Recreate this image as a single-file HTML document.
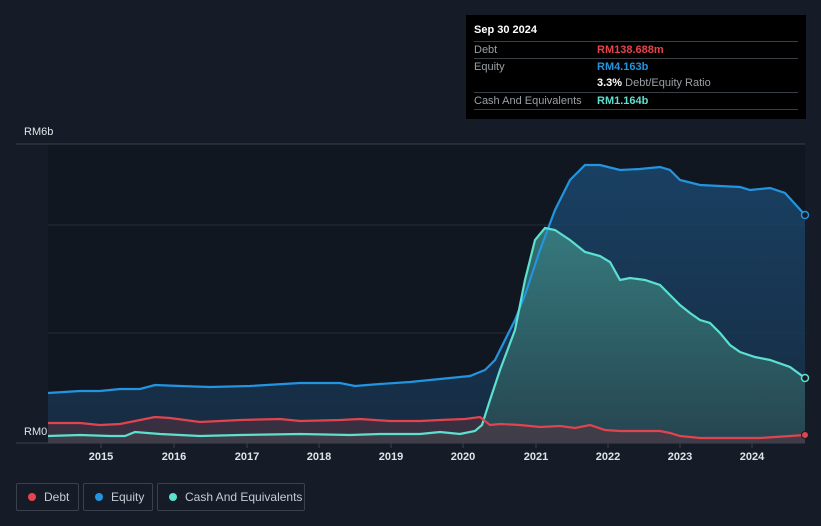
<!DOCTYPE html><html><head><style>
body{margin:0;width:821px;height:526px;background:#151c27;font-family:"Liberation Sans",sans-serif;overflow:hidden;position:relative}
.tt{position:absolute;left:466px;top:15px;width:340px;height:104px;background:#000;color:#fff;font-size:11px}
.row{position:absolute;left:8px;width:324px;border-top:1px solid #3a3f46;height:16px;line-height:16px;color:#9aa0a6}
.row span{position:absolute;left:123px}
.leg{position:absolute;top:483px;height:26px;border:1px solid #3a414c;border-radius:2px;color:#c6cbd2;font-size:12px;line-height:26px}
.dot{display:inline-block;width:8px;height:8px;border-radius:50%;margin:0 8px 0 11px;vertical-align:-0px}
.yr{position:absolute;top:451px;color:#e0e3e7;font-size:11px;font-weight:bold;transform:translateX(-50%)}
</style></head><body>
<svg width="821" height="526" style="position:absolute;left:0;top:0">
<rect x="48" y="144" width="757" height="299" fill="#111721"/>
<line x1="16" y1="144" x2="805" y2="144" stroke="#3a414c"/>
<line x1="48" y1="225" x2="805" y2="225" stroke="#252c37"/>
<line x1="48" y1="333" x2="805" y2="333" stroke="#252c37"/>
<defs><linearGradient id="ge" x1="0" y1="0" x2="0" y2="1"><stop offset="0" stop-color="#1b4a72" stop-opacity=".8"/><stop offset="1" stop-color="#173049" stop-opacity=".8"/></linearGradient>
<linearGradient id="gc" x1="0" y1="0" x2="0" y2="1"><stop offset="0" stop-color="#3f8f89" stop-opacity=".75"/><stop offset="1" stop-color="#2b4d55" stop-opacity=".75"/></linearGradient></defs>
<path fill="url(#ge)" d="M48,393 L80,391 100,391 120,389 140,389 155,385 180,386 210,387 250,386 300,383 340,383 355,386 380,384 410,382 440,379 470,376 485,370 495,360 505,340 515,320 525,295 540,250 555,210 570,180 585,165 600,165 620,170 640,169 660,167 670,170 680,180 700,185 720,186 740,187 750,190 770,188 785,193 805,215 L805,443 48,443Z"/>
<path fill="url(#gc)" d="M48,436 L80,435 110,436 125,436 135,432 160,434 200,436 240,435 300,434 350,435 380,434 420,434 440,432 460,434 475,431 482,425 490,400 500,370 515,330 525,280 535,240 545,228 555,230 570,240 585,252 600,256 610,262 620,280 630,278 645,280 660,285 670,295 680,305 690,313 700,320 710,323 720,333 730,345 740,352 755,357 770,360 790,367 805,378 L805,443 48,443Z"/>
<path fill="#5a3440" fill-opacity=".5" d="M48,423 L80,423 100,425 120,424 140,420 155,417 170,418 200,422 240,420 280,419 300,421 340,420 360,419 390,421 420,421 440,420 465,419 480,417 490,425 500,424 520,425 540,427 560,426 575,428 590,425 605,430 620,431 660,431 670,433 680,436 700,438 740,438 760,438 805,435 L805,443 48,443Z"/>
<path fill="none" stroke="#2394e0" stroke-width="2.2" d="M48,393 L80,391 100,391 120,389 140,389 155,385 180,386 210,387 250,386 300,383 340,383 355,386 380,384 410,382 440,379 470,376 485,370 495,360 505,340 515,320 525,295 540,250 555,210 570,180 585,165 600,165 620,170 640,169 660,167 670,170 680,180 700,185 720,186 740,187 750,190 770,188 785,193 805,215"/>
<path fill="none" stroke="#5ce0cf" stroke-width="2.2" d="M48,436 L80,435 110,436 125,436 135,432 160,434 200,436 240,435 300,434 350,435 380,434 420,434 440,432 460,434 475,431 482,425 490,400 500,370 515,330 525,280 535,240 545,228 555,230 570,240 585,252 600,256 610,262 620,280 630,278 645,280 660,285 670,295 680,305 690,313 700,320 710,323 720,333 730,345 740,352 755,357 770,360 790,367 805,378"/>
<path fill="none" stroke="#e0444f" stroke-width="2.2" d="M48,423 L80,423 100,425 120,424 140,420 155,417 170,418 200,422 240,420 280,419 300,421 340,420 360,419 390,421 420,421 440,420 465,419 480,417 490,425 500,424 520,425 540,427 560,426 575,428 590,425 605,430 620,431 660,431 670,433 680,436 700,438 740,438 760,438 805,435"/>
<line x1="16" y1="443" x2="805" y2="443" stroke="#3a414c"/>
<g stroke="#3a414c"><line x1="101" y1="443" x2="101" y2="448"/><line x1="174" y1="443" x2="174" y2="448"/><line x1="247" y1="443" x2="247" y2="448"/><line x1="319" y1="443" x2="319" y2="448"/><line x1="391" y1="443" x2="391" y2="448"/><line x1="463" y1="443" x2="463" y2="448"/><line x1="536" y1="443" x2="536" y2="448"/><line x1="608" y1="443" x2="608" y2="448"/><line x1="680" y1="443" x2="680" y2="448"/><line x1="752" y1="443" x2="752" y2="448"/></g>
<circle cx="805" cy="215" r="3.5" fill="#151c27" stroke="#2394e0" stroke-width="1.5"/>
<circle cx="805" cy="378" r="3.5" fill="#151c27" stroke="#5ce0cf" stroke-width="1.5"/>
<circle cx="805" cy="435" r="3.5" fill="#e0444f" stroke="#151c27"/>
<rect x="16" y="422" width="32" height="20" fill="#151c27"/>
<text x="24" y="135" fill="#e0e3e7" font-size="11" font-family="Liberation Sans">RM6b</text>
<text x="24" y="435" fill="#e0e3e7" font-size="11" font-family="Liberation Sans">RM0</text>
</svg>
<div class="yr" style="left:101px">2015</div><div class="yr" style="left:174px">2016</div><div class="yr" style="left:247px">2017</div><div class="yr" style="left:319px">2018</div><div class="yr" style="left:391px">2019</div><div class="yr" style="left:463px">2020</div><div class="yr" style="left:536px">2021</div><div class="yr" style="left:608px">2022</div><div class="yr" style="left:680px">2023</div><div class="yr" style="left:752px">2024</div>
<div class="tt">
<div style="position:absolute;left:8px;top:9px;font-weight:bold">Sep 30 2024</div>
<div class="row" style="top:26px">Debt<span style="color:#e5444c;font-weight:bold">RM138.688m</span></div>
<div class="row" style="top:43px">Equity<span style="color:#2394e0;font-weight:bold">RM4.163b</span></div>
<div class="row" style="top:60px;border-top:none"><span><b style="color:#fff">3.3%</b> Debt/Equity Ratio</span></div>
<div class="row" style="top:77px">Cash And Equivalents<span style="color:#5ce0cf;font-weight:bold">RM1.164b</span></div>
<div class="row" style="top:94px;height:0"></div>
</div>
<div class="leg" style="left:16px;width:61px"><span class="dot" style="background:#e5444c"></span>Debt</div>
<div class="leg" style="left:83px;width:68px"><span class="dot" style="background:#2394e0"></span>Equity</div>
<div class="leg" style="left:157px;width:146px"><span class="dot" style="background:#5ce0cf"></span>Cash And Equivalents</div>
</body></html>
